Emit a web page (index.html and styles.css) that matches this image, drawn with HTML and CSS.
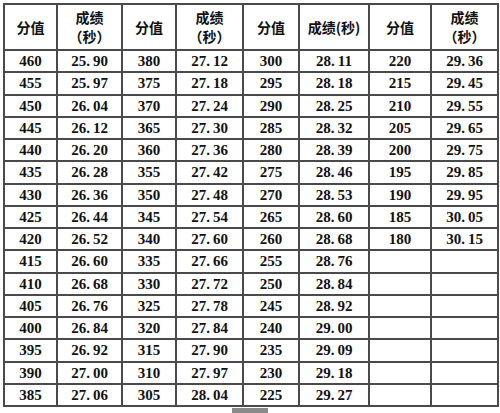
FILE: index.html
```html
<!DOCTYPE html>
<html lang="zh">
<head>
<meta charset="utf-8">
<link rel="stylesheet" href="styles.css">
</head>
<body>
<div class="page">
<table class="grid">
  <colgroup>
    <col class="c1"><col class="c2"><col class="c3"><col class="c4">
    <col class="c5"><col class="c6"><col class="c7"><col class="c8">
  </colgroup>
  <thead>
    <tr class="head">
      <th>分值</th><th>成绩<br>（秒）</th>
      <th>分值</th><th>成绩<br>（秒）</th>
      <th>分值</th><th>成绩(秒)</th>
      <th>分值</th><th>成绩<br>（秒）</th>
    </tr>
  </thead>
  <tbody>
    <tr><td>460</td><td>25<span class="pt">.</span>90</td><td>380</td><td>27<span class="pt">.</span>12</td><td>300</td><td>28<span class="pt">.</span>11</td><td>220</td><td>29<span class="pt">.</span>36</td></tr>
    <tr><td>455</td><td>25<span class="pt">.</span>97</td><td>375</td><td>27<span class="pt">.</span>18</td><td>295</td><td>28<span class="pt">.</span>18</td><td>215</td><td>29<span class="pt">.</span>45</td></tr>
    <tr><td>450</td><td>26<span class="pt">.</span>04</td><td>370</td><td>27<span class="pt">.</span>24</td><td>290</td><td>28<span class="pt">.</span>25</td><td>210</td><td>29<span class="pt">.</span>55</td></tr>
    <tr><td>445</td><td>26<span class="pt">.</span>12</td><td>365</td><td>27<span class="pt">.</span>30</td><td>285</td><td>28<span class="pt">.</span>32</td><td>205</td><td>29<span class="pt">.</span>65</td></tr>
    <tr><td>440</td><td>26<span class="pt">.</span>20</td><td>360</td><td>27<span class="pt">.</span>36</td><td>280</td><td>28<span class="pt">.</span>39</td><td>200</td><td>29<span class="pt">.</span>75</td></tr>
    <tr><td>435</td><td>26<span class="pt">.</span>28</td><td>355</td><td>27<span class="pt">.</span>42</td><td>275</td><td>28<span class="pt">.</span>46</td><td>195</td><td>29<span class="pt">.</span>85</td></tr>
    <tr><td>430</td><td>26<span class="pt">.</span>36</td><td>350</td><td>27<span class="pt">.</span>48</td><td>270</td><td>28<span class="pt">.</span>53</td><td>190</td><td>29<span class="pt">.</span>95</td></tr>
    <tr><td>425</td><td>26<span class="pt">.</span>44</td><td>345</td><td>27<span class="pt">.</span>54</td><td>265</td><td>28<span class="pt">.</span>60</td><td>185</td><td>30<span class="pt">.</span>05</td></tr>
    <tr><td>420</td><td>26<span class="pt">.</span>52</td><td>340</td><td>27<span class="pt">.</span>60</td><td>260</td><td>28<span class="pt">.</span>68</td><td>180</td><td>30<span class="pt">.</span>15</td></tr>
    <tr><td>415</td><td>26<span class="pt">.</span>60</td><td>335</td><td>27<span class="pt">.</span>66</td><td>255</td><td>28<span class="pt">.</span>76</td><td></td><td></td></tr>
    <tr><td>410</td><td>26<span class="pt">.</span>68</td><td>330</td><td>27<span class="pt">.</span>72</td><td>250</td><td>28<span class="pt">.</span>84</td><td></td><td></td></tr>
    <tr><td>405</td><td>26<span class="pt">.</span>76</td><td>325</td><td>27<span class="pt">.</span>78</td><td>245</td><td>28<span class="pt">.</span>92</td><td></td><td></td></tr>
    <tr><td>400</td><td>26<span class="pt">.</span>84</td><td>320</td><td>27<span class="pt">.</span>84</td><td>240</td><td>29<span class="pt">.</span>00</td><td></td><td></td></tr>
    <tr><td>395</td><td>26<span class="pt">.</span>92</td><td>315</td><td>27<span class="pt">.</span>90</td><td>235</td><td>29<span class="pt">.</span>09</td><td></td><td></td></tr>
    <tr><td>390</td><td>27<span class="pt">.</span>00</td><td>310</td><td>27<span class="pt">.</span>97</td><td>230</td><td>29<span class="pt">.</span>18</td><td></td><td></td></tr>
    <tr><td>385</td><td>27<span class="pt">.</span>06</td><td>305</td><td>28<span class="pt">.</span>04</td><td>225</td><td>29<span class="pt">.</span>27</td><td></td><td></td></tr>
  </tbody>
</table>
<div class="scrap"></div>
</div>
</body>
</html>
```
FILE: styles.css
```css
html, body {
  margin: 0;
  padding: 0;
  background: #fff;
}
.page {
  padding: 3px 0 0 3px;
  width: 500px;
  height: 413px;
  box-sizing: border-box;
  overflow: hidden;
}
.grid {
  border-collapse: collapse;
  table-layout: fixed;
  width: 494px;
  height: 404px;
  border: 2px solid #111;
  color: #111;
}
.c1 { width: 53px; }
.c2 { width: 65px; }
.c3 { width: 54px; }
.c4 { width: 67px; }
.c5 { width: 56px; }
.c6 { width: 70px; }
.c7 { width: 62px; }
.c8 { width: 67px; }
.grid th, .grid td {
  border: 2px solid #4a4a4a;
  padding: 0;
  text-align: center;
  vertical-align: middle;
}
.grid th {
  font-family: "Noto Sans CJK SC", sans-serif;
  font-weight: 700;
  font-size: 14px;
  line-height: 19px;
}
.head {
  height: 46px;
}
.grid td {
  font-family: "Liberation Serif", serif;
  font-weight: 700;
  font-size: 15px;
  line-height: 16px;
}
.pt {
  margin-right: 3px;
}
.scrap {
  margin: 1px 0 0 229px;
  width: 36px;
  height: 6px;
  background: #8a8a8a;
}
```
